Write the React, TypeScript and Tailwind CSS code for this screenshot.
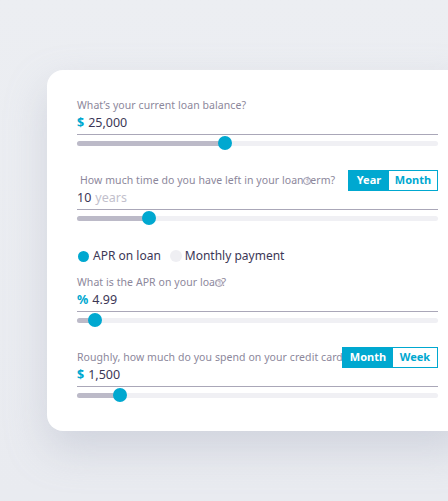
import React from "react";

const font = { fontFamily: '"Noto Sans", "DejaVu Sans", sans-serif' };

function HelpIcon({ left, top }: { left: number; top: number }) {
  return (
    <span
      className="absolute w-[8px] h-[8px] rounded-full border border-[#9f9aae] bg-white/60 flex items-center justify-center text-[6px] leading-none text-[#9f9aae]"
      style={{ left, top }}
    >
      ?
    </span>
  );
}

function Slider({ pct }: { pct: number }) {
  return (
    <div className="relative h-[14px] mt-[1px] flex items-center">
      <div className="w-full h-[5px] rounded-full bg-[#f0f0f4] relative">
        <div className="h-full rounded-full bg-[#bcbac8]" style={{ width: `${pct}px` }} />
      </div>
      <div
        className="absolute top-0 w-[14px] h-[14px] rounded-full bg-[#00a8d0]"
        style={{ left: pct - 7 }}
      />
    </div>
  );
}

function Toggle({ a, b, wa, wb }: { a: string; b: string; wa: number; wb: number }) {
  return (
    <div className="absolute right-0 top-0 h-[21px] flex border-[1.5px] border-[#00a8d0] bg-white text-[11px] font-bold">
      <div className="bg-[#00a8d0] text-white flex items-center justify-center" style={{ width: wa }}>
        {a}
      </div>
      <div className="text-[#00a8d0] flex items-center justify-center" style={{ width: wb }}>
        {b}
      </div>
    </div>
  );
}

function Field({
  label,
  prefix,
  value,
  suffix,
  pct,
  toggle,
  indent,
}: {
  label: string;
  prefix?: string;
  value: string;
  suffix?: string;
  pct: number;
  toggle?: React.ReactNode;
  indent?: boolean;
}) {
  return (
    <div className="relative">
      <div className={`h-[21px] flex items-center text-[10.5px] tracking-[0.07px] text-[#8c879b] whitespace-nowrap ${indent ? "pl-[3px]" : ""}`}>
        {label}
      </div>
      {toggle}
      <div className="h-[14px] flex items-center text-[12.5px] text-[#3c3756] whitespace-nowrap">
        {prefix && <span className="text-[#00a8d0] font-bold mr-[4px]">{prefix}</span>}
        <span>{value}</span>
        {suffix && <span className="text-[#c2bfcc] ml-[4px]">{suffix}</span>}
      </div>
      <div className="mt-[4px] h-px bg-[#aaa7b8]" />
      <Slider pct={pct} />
    </div>
  );
}

export default function App() {
  return (
    <div
      className="w-[448px] h-[501px] overflow-hidden bg-gradient-to-b from-[#eceef2] to-[#e9ebf0] pt-[70px] pl-[47px]"
      style={font}
    >
      <div className="w-[420px] h-[361px] bg-white rounded-l-[16px] shadow-[0_18px_40px_rgba(160,165,185,0.35)] pl-[30px] pr-[29px] pt-[25px]">
        <Field label="What’s your current loan balance?" prefix="$" value="25,000" pct={148} />
        <div className="h-[20px]" />
        <div className="relative">
          <Field
            label="How much time do you have left in your loan term?"
            value="10"
            suffix="years"
            pct={72}
            toggle={<Toggle a="Year" b="Month" wa={40} wb={48} />}
            indent
          />
          <HelpIcon left={226} top={7} />
        </div>
        <div className="h-[23px]" />
        <div className="h-[16px] flex items-center text-[12px] text-[#3c3756]">
          <span className="w-[11px] h-[11px] rounded-full bg-[#00a8d0] ml-[1px] mr-[4px]" />
          <span>APR on loan</span>
          <span className="w-[12px] h-[12px] rounded-full bg-[#efeff3] ml-[9px] mr-[3px]" />
          <span>Monthly payment</span>
        </div>
        <div className="h-[8px]" />
        <div className="relative">
          <Field label="What is the APR on your loan?" prefix="%" value="4.99" pct={18} />
          <HelpIcon left={138} top={7} />
        </div>
        <div className="h-[20px]" />
        <Field
          label="Roughly, how much do you spend on your credit card?"
          prefix="$"
          value="1,500"
          pct={43}
          toggle={<Toggle a="Month" b="Week" wa={50} wb={44} />}
        />
      </div>
    </div>
  );
}
